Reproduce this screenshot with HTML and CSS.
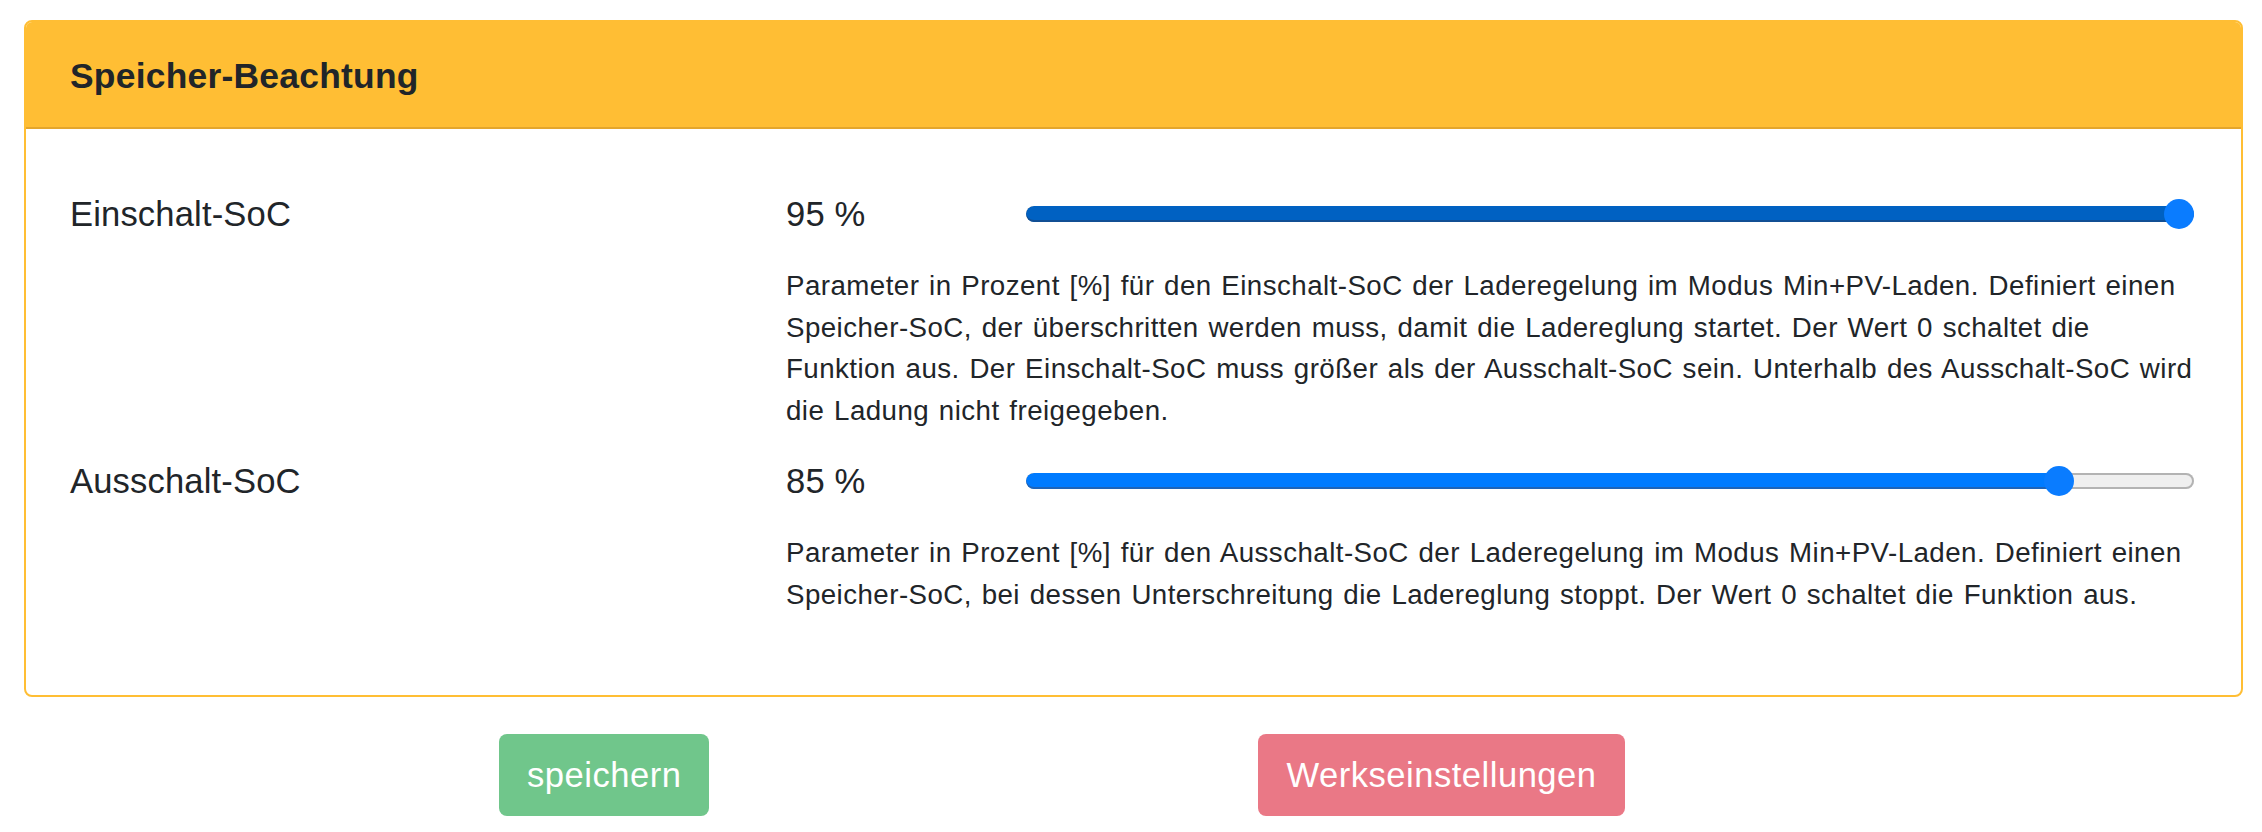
FILE: index.html
```html
<!DOCTYPE html>
<html lang="de">
<head>
<meta charset="utf-8">
<title>Speicher-Beachtung</title>
<link rel="stylesheet" href="styles.css">
</head>
<body>
<div class="page">
  <div class="card">
    <div class="card-header">
      <h4 class="card-title">Speicher-Beachtung</h4>
    </div>
    <div class="card-body">
      <div class="setting">
        <div class="setting-label">Einschalt-SoC</div>
        <div class="setting-value">95 %</div>
        <div class="slider">
          <div class="track track-full">
            <div class="fill fill-dark" style="width: 100%"></div>
          </div>
          <div class="thumb" style="left: calc((100% - 30px) * 1)"></div>
        </div>
        <p class="setting-help">Parameter in Prozent [%] für den Einschalt-SoC der Laderegelung im Modus Min+PV-Laden. Definiert einen Speicher-SoC, der überschritten werden muss, damit die Ladereglung startet. Der Wert 0 schaltet die Funktion aus. Der Einschalt-SoC muss größer als der Ausschalt-SoC sein. Unterhalb des Ausschalt-SoC wird die Ladung nicht freigegeben.</p>
      </div>
      <div class="setting">
        <div class="setting-label">Ausschalt-SoC</div>
        <div class="setting-value">85 %</div>
        <div class="slider">
          <div class="track">
            <div class="fill" style="width: calc((100% - 30px) * 0.8947 + 15px)"></div>
          </div>
          <div class="thumb" style="left: calc((100% - 30px) * 0.8947)"></div>
        </div>
        <p class="setting-help">Parameter in Prozent [%] für den Ausschalt-SoC der Laderegelung im Modus Min+PV-Laden. Definiert einen Speicher-SoC, bei dessen Unterschreitung die Ladereglung stoppt. Der Wert 0 schaltet die Funktion aus.</p>
      </div>
    </div>
  </div>
  <div class="actions">
    <button class="btn btn-save" type="button">speichern</button>
    <button class="btn btn-reset" type="button">Werkseinstellungen</button>
  </div>
</div>
</body>
</html>
```
FILE: styles.css
```css
html, body {
  margin: 0;
  padding: 0;
  background: #ffffff;
}

body {
  font-family: "Liberation Sans", Arial, Helvetica, sans-serif;
  color: #212529;
}

.page {
  padding: 20px 19px 0 24px;
}

.card {
  border: 2px solid #ffbe34;
  border-radius: 8px;
  background: #ffffff;
  overflow: hidden;
}

.card-header {
  background: #ffbe34;
  border-bottom: 2px solid #e4a62c;
  padding: 33px 44px 30px;
}

.card-title {
  margin: 0;
  font-size: 35.4px;
  line-height: 42px;
  font-weight: 700;
  letter-spacing: 0.25px;
  color: #212529;
}

.card-body {
  padding: 59px 47px 79px 44px;
}

.setting {
  display: grid;
  grid-template-columns: 716px 240px 1fr;
  align-items: center;
}

.setting + .setting {
  margin-top: 24px;
}

.setting-label,
.setting-value {
  font-size: 34.6px;
  line-height: 52px;
  letter-spacing: 0.15px;
}

.slider {
  position: relative;
  height: 30px;
  display: flex;
  align-items: center;
}

.track {
  flex: 1;
  height: 16px;
  border-radius: 8px;
  background: #efefef;
  box-shadow: inset 0 0 0 2px #b3b3b3;
  overflow: hidden;
  display: flex;
}

.fill {
  height: 100%;
  background: #007bff;
  box-shadow: inset 0 -2px 0 #1f64b8;
  border-radius: 8px 0 0 8px;
}

.fill-dark {
  background: #0061c2;
  box-shadow: inset 0 -2px 0 #114f94;
  border-radius: 8px;
}

.thumb {
  position: absolute;
  top: 0;
  width: 30px;
  height: 30px;
  border-radius: 50%;
  background: #0a7cff;
}

.setting-help {
  grid-column: 2 / 4;
  margin: 25px 0 0;
  font-size: 27.7px;
  line-height: 41.6px;
  letter-spacing: 0.45px;
  word-spacing: 1.6px;
}

.actions {
  display: flex;
  gap: 549px;
  margin-top: 37px;
  padding-left: 475px;
}

.btn {
  font-family: "Liberation Sans", Arial, Helvetica, sans-serif;
  font-size: 34.6px;
  line-height: 52px;
  letter-spacing: 0.5px;
  padding: 15px 28px;
  border: 0;
  border-radius: 8px;
  color: #ffffff;
  cursor: default;
}

.btn-save {
  background: #70c68b;
}

.btn-reset {
  background: #ea7886;
}
```
